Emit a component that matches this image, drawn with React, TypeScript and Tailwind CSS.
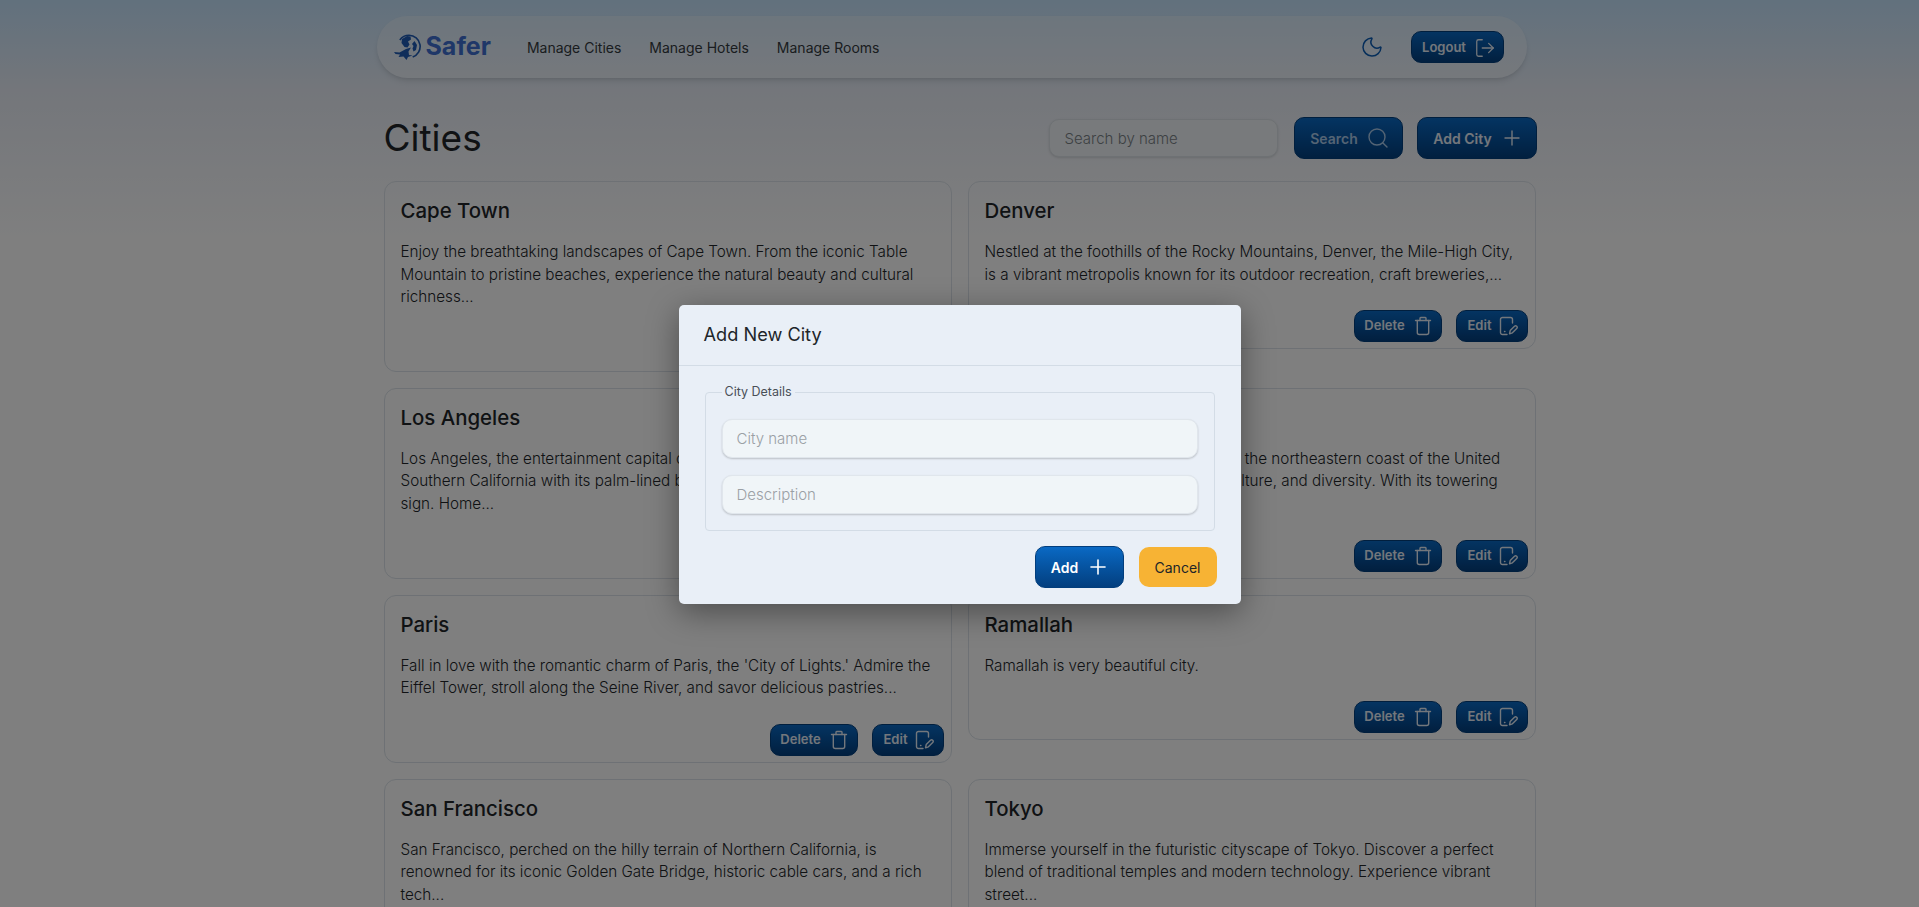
import { Moon, Plus, Search, LogOut } from "lucide-react";

const cities = [
  { name: "Cape Town", text: "Enjoy the breathtaking landscapes of Cape Town. From the iconic Table Mountain to pristine beaches, experience the natural beauty and cultural richness..." },
  { name: "Denver", text: "Nestled at the foothills of the Rocky Mountains, Denver, the Mile-High City, is a vibrant metropolis known for its outdoor recreation, craft breweries,..." },
  { name: "Los Angeles", text: "Los Angeles, the entertainment capital of the world, beckons visitors to Southern California with its palm-lined boulevards and iconic Hollywood sign. Home..." },
  { name: "New York", text: "New York City, an icon placed along the northeastern coast of the United States, is a global hub of finance, culture, and diversity. With its towering skyscrapers..." },
  { name: "Paris", text: "Fall in love with the romantic charm of Paris, the 'City of Lights.' Admire the Eiffel Tower, stroll along the Seine River, and savor delicious pastries..." },
  { name: "Ramallah", text: "Ramallah is very beautiful city." },
  { name: "San Francisco", text: "San Francisco, perched on the hilly terrain of Northern California, is renowned for its iconic Golden Gate Bridge, historic cable cars, and a rich tech..." },
  { name: "Tokyo", text: "Immerse yourself in the futuristic cityscape of Tokyo. Discover a perfect blend of traditional temples and modern technology. Experience vibrant street..." },
];

const btn =
  "flex items-center justify-center rounded-[10px] border border-[#023e7d] bg-gradient-to-b from-[#0a69c4] to-[#033f7f] font-semibold text-[#e6eef8]";

function TrashIcon() {
  return (
    <svg width="20" height="20" viewBox="0 0 20 20" fill="none" stroke="currentColor" strokeWidth="1.4" strokeLinecap="round" strokeLinejoin="round">
      <path d="M2.500 4.500h15" />
      <path d="M7 4.500V2.200a.7.7 0 0 1 .7-.7h4.600a.7.7 0 0 1 .7.7v2.300" />
      <path d="M4.300 4.500v12a2 2 0 0 0 2 2h7.400a2 2 0 0 0 2-2v-12" />
    </svg>
  );
}

function EditIcon() {
  return (
    <svg width="19" height="20" viewBox="0 0 19 20" fill="none" stroke="currentColor" strokeWidth="1.4" strokeLinecap="round" strokeLinejoin="round">
      <path d="M8 18.500H3.500a2 2 0 0 1-2-2v-13a2 2 0 0 1 2-2h8a2 2 0 0 1 2 2v3.500" />
      <path d="M5.500 15.500h.4" />
      <path d="M10.500 17.800l.7-3.200 4.300-4.300a1.500 1.500 0 0 1 2.200 2.200l-4.300 4.300z" />
    </svg>
  );
}

function Logo() {
  return (
    <svg width="27" height="27" viewBox="0 0 27 27" fill="#1f5bb5">
      {/* globe ring */}
      <path d="M15 .5a12 12 0 0 1 4 23.300l-.6-1.500A10.400 10.400 0 0 0 15 2.100 10.400 10.400 0 0 0 6.500 6.500L5.200 5.600A12 12 0 0 1 15 .5z" />
      {/* continents */}
      <path d="M8 5l5-3 3.500.5.5 3-3 2 1.500 3-2 3-3-.5-3-4z" />
      <path d="M20.500 7l2.500 4-1 5-2.500 1.500-1-3 1-2.500-1.500-2z" />
      {/* plane */}
      <path d="M0 18l5.500.5L12 15l5-1.500-2.500 4 .5 3.500 3.500.5-4.500 1.500-1.500 3-3-3.500-5 .5 1.500-2.500L1.500 20z" />
    </svg>
  );
}

function CityCard({ name, text }: { name: string; text: string }) {
  return (
    <div className="flex flex-col rounded-xl border border-[#dce3ea] pt-[15px] pr-4 pb-[6px] pl-4">
      <h3 className="text-[20.4px] leading-[28px] font-medium text-[#212529]">{name}</h3>
      <p className="mt-4 text-[15.25px] leading-[22.6px] font-light text-[#212529]">{text}</p>
      <div className="mt-6 -mr-[9px] flex justify-end gap-[14px]">
        <button className={`${btn} h-[32px] w-[88px] gap-2 pl-[2px] text-[13px]`}>
          Delete
          <TrashIcon />
        </button>
        <button className={`${btn} h-[32px] w-[72px] gap-2 pl-[3px] text-[13px]`}>
          Edit
          <EditIcon />
        </button>
      </div>
    </div>
  );
}

export default function App() {
  return (
    <div className="relative h-[907px] overflow-hidden bg-[linear-gradient(to_bottom,#c4e2fb_0px,#e8edf6_90px,#ffffff_243px)] font-['Inter',sans-serif] text-[#212529]">
      <div className="mx-auto w-[1152px] pt-4">
        <nav className="-ml-[7px] flex h-[62px] w-[1150px] items-center rounded-[31px] bg-white/30 pr-[23px] pl-[17px] shadow-md">
          <div className="flex items-center gap-[5px]">
            <Logo />
            <span className="text-[25px] font-bold text-[#3f6fd1]">Safer</span>
          </div>
          <div className="ml-[36px] flex gap-[28px] text-[14px] text-[#343a40]">
            <span>Manage Cities</span>
            <span>Manage Hotels</span>
            <span>Manage Rooms</span>
          </div>
          <Moon className="ml-auto text-[#0b5cb5]" size={24} strokeWidth={1.5} />
          <button className={`${btn} ml-[27px] h-[32px] w-[93px] gap-2 pt-px pl-[4px] text-[13px]`}>
            Logout
            <LogOut size={22} strokeWidth={1.4} />
          </button>
        </nav>

        <div className="mt-[39px] -mr-px flex h-[42px] items-center">
          <h1 className="text-[37px] leading-[42px] font-normal">Cities</h1>
          <input
            placeholder="Search by name"
            className="ml-auto h-[38px] w-[229px] rounded-[10px] border border-[#dde3e8] bg-[#f0f5f8] px-[15px] text-[15px] font-light shadow-sm outline-none placeholder:text-[#7b8287]"
          />
          <button className={`${btn} ml-4 h-[42px] w-[109px] gap-2 pl-[4px] text-[14px] font-medium !text-[#a9c8e8]`}>
            Search
            <Search size={24} strokeWidth={1.4} />
          </button>
          <button className={`${btn} ml-[14px] h-[42px] w-[120px] gap-2 pl-[4px] text-[14px]`}>
            Add City
            <Plus size={24} strokeWidth={1.4} />
          </button>
        </div>

        <div className="mt-[22px] grid grid-cols-2 items-start gap-x-4 gap-y-4">
          {cities.map((city) => (
            <CityCard key={city.name} name={city.name} text={city.text} />
          ))}
        </div>
      </div>

      {/* modal backdrop */}
      <div className="absolute inset-0 bg-black/50">
        <div className="mx-auto mt-[305px] w-[562px] rounded-[5px] bg-[#e9eff7] shadow-[0_8px_32px_rgba(0,0,0,0.4)]">
          <div className="flex h-[61px] items-center border-b border-[#d3dce6] pr-6 pl-[25px]">
            <h2 className="text-[18.2px] font-normal text-[#212529]">Add New City</h2>
          </div>
          <div className="px-[26px] pt-[19px] pb-4">
            <fieldset className="rounded border border-[#d3dce6] px-4 pt-[20px] pb-4">
              <legend className="px-[3px] text-[12.5px] leading-[14px] text-[#495057]">City Details</legend>
              <input
                placeholder="City name"
                className="block h-[39px] w-full rounded-[10px] border border-[#e0e6ec] bg-[#f0f5f8] px-[14px] text-[15px] font-light shadow-[0_1px_2px_rgba(0,0,0,0.2)] outline-none placeholder:text-[#9aa0a5]"
              />
              <input
                placeholder="Description"
                className="mt-[17px] block h-[39px] w-full rounded-[10px] border border-[#e0e6ec] bg-[#f0f5f8] px-[14px] text-[15px] font-light shadow-[0_1px_2px_rgba(0,0,0,0.2)] outline-none placeholder:text-[#9aa0a5]"
              />
            </fieldset>
            <div className="mt-[15px] -mr-[2px] flex items-center justify-end gap-[15px]">
              <button className={`${btn} h-[42px] w-[89px] gap-2 pl-[3px] text-[14px] !text-white`}>
                Add
                <Plus size={24} strokeWidth={1.6} />
              </button>
              <button className="h-10 w-[78px] rounded-[10px] bg-[#f7b334] text-[14px] font-normal text-[#212529]">
                Cancel
              </button>
            </div>
          </div>
        </div>
      </div>
    </div>
  );
}
